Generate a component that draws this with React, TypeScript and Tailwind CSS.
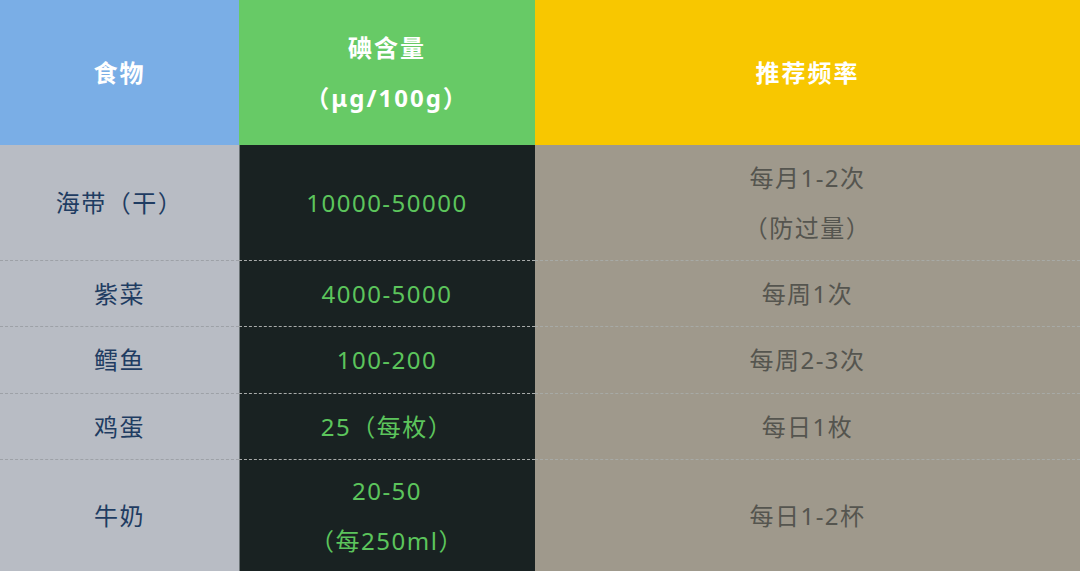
import { FC, ReactNode } from 'react';

type Row = { food: string; iodine: string[]; freq: string[]; h: string };

const ROWS: Row[] = [
  { food: '海带（干）', iodine: ['10000-50000'], freq: ['每月1-2次', '（防过量）'], h: 'h-[116px]' },
  { food: '紫菜', iodine: ['4000-5000'], freq: ['每周1次'], h: 'h-[66px]' },
  { food: '鳕鱼', iodine: ['100-200'], freq: ['每周2-3次'], h: 'h-[67px]' },
  { food: '鸡蛋', iodine: ['25（每枚）'], freq: ['每日1枚'], h: 'h-[66px]' },
  { food: '牛奶', iodine: ['20-50', '（每250ml）'], freq: ['每日1-2杯'], h: 'h-[111px]' },
];

const Lines: FC<{ lines: string[] }> = ({ lines }) => (
  <div className="flex flex-col items-center">
    {lines.map(l => (
      <span key={l} className="leading-[50px] whitespace-nowrap">
        {l}
      </span>
    ))}
  </div>
);

const Cell: FC<{ className: string; children: ReactNode }> = ({ className, children }) => (
  <div className={`flex items-center justify-center ${className}`}>{children}</div>
);

export default function App() {
  return (
    <div
      className="w-[1080px] h-[571px] overflow-hidden flex flex-col text-[24px] tracking-[1.5px]"
      style={{ fontFamily: '"Noto Sans", "Noto Sans CJK SC", sans-serif' }}
    >
      <div className="flex h-[145px] font-bold text-white text-[24px] tracking-[2px]">
        <Cell className="w-[239px] bg-[#7aaee6]">
          <Lines lines={['食物']} />
        </Cell>
        <Cell className="w-[296px] bg-[#67ca66]">
          <Lines lines={['碘含量', '（μg/100g）']} />
        </Cell>
        <Cell className="flex-1 bg-[#f8c700]">
          <Lines lines={['推荐频率']} />
        </Cell>
      </div>
      {ROWS.map((r, i) => {
        const last = i === ROWS.length - 1;
        return (
          <div key={r.food} className={`flex ${r.h}`}>
            <Cell
              className={`w-[239px] bg-[#b8bcc4] text-[#1f3c62] ${last ? '' : 'border-b border-dashed border-[#9da1a7]'}`}
            >
              <Lines lines={[r.food]} />
            </Cell>
            <Cell
              className={`w-[296px] bg-[#192222] text-[#5cc55c] shadow-[inset_1px_0_0_#6b7376] ${last ? '' : 'border-b border-dashed border-[#a9acab]'}`}
            >
              <Lines lines={r.iodine} />
            </Cell>
            <Cell
              className={`flex-1 bg-[#9f998c] text-[#55554f] ${last ? '' : 'border-b border-dashed border-[#a7aaa6]'}`}
            >
              <Lines lines={r.freq} />
            </Cell>
          </div>
        );
      })}
    </div>
  );
}
